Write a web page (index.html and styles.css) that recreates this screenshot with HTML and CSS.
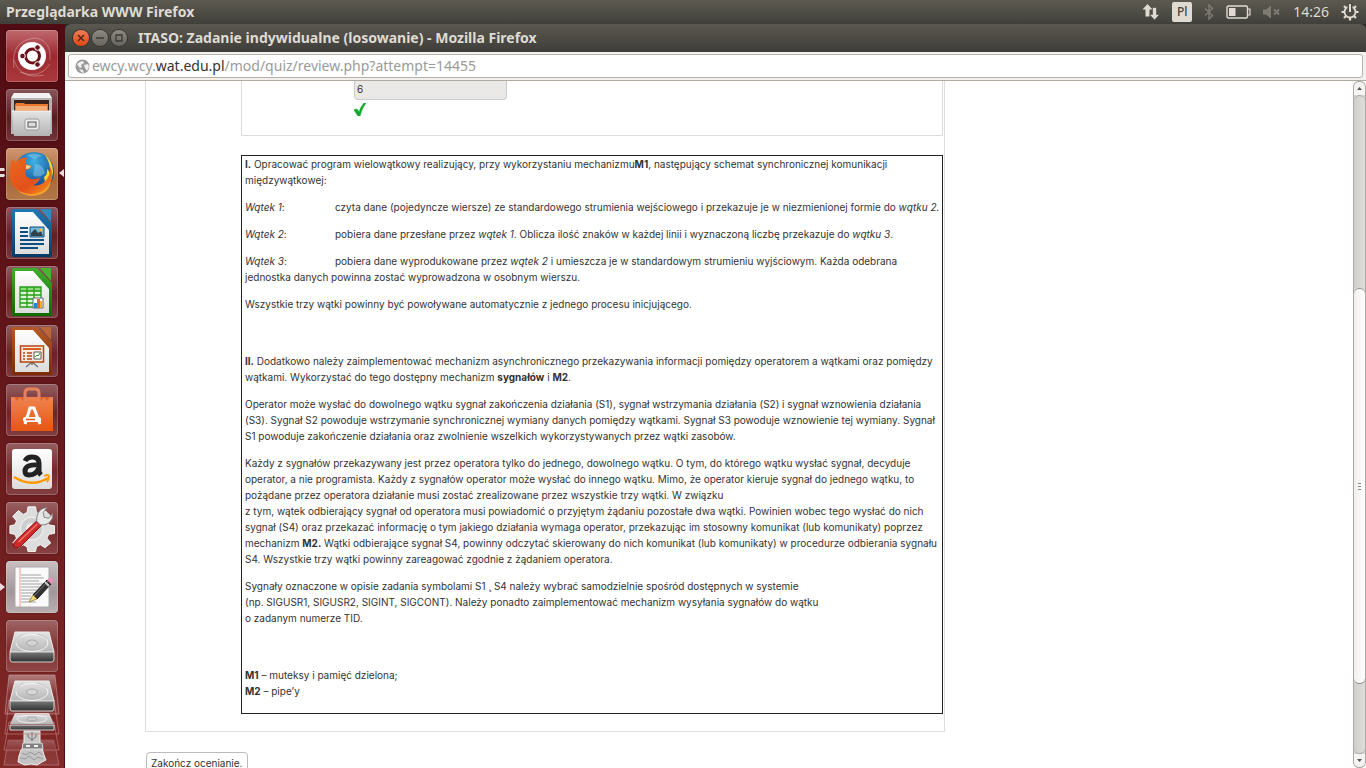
FILE: index.html
```html
<!DOCTYPE html>
<html lang="pl">
<head>
<meta charset="utf-8">
<title>ITASO: Zadanie indywidualne (losowanie)</title>
<link rel="stylesheet" href="styles.css">
</head>
<body>
<svg class="defs" aria-hidden="true">
  <defs>
    <linearGradient id="metal" x1="0" y1="0" x2="0" y2="1"><stop offset="0" stop-color="#e4e4e4"/><stop offset="1" stop-color="#b4b4b4"/></linearGradient>
    <linearGradient id="front" x1="0" y1="0" x2="0" y2="1"><stop offset="0" stop-color="#777"/><stop offset="1" stop-color="#303030"/></linearGradient>
    <linearGradient id="paper" x1="0" y1="0" x2="0" y2="1"><stop offset="0" stop-color="#fff"/><stop offset="1" stop-color="#dcdcdc"/></linearGradient>
    <linearGradient id="blue" x1="0" y1="0" x2="0" y2="1"><stop offset="0" stop-color="#1e79b4"/><stop offset="1" stop-color="#063a66"/></linearGradient>
    <linearGradient id="green" x1="0" y1="0" x2="0" y2="1"><stop offset="0" stop-color="#3fae2e"/><stop offset="1" stop-color="#0c6a00"/></linearGradient>
    <linearGradient id="brown" x1="0" y1="0" x2="0" y2="1"><stop offset="0" stop-color="#b55a27"/><stop offset="1" stop-color="#7c2c00"/></linearGradient>
    <linearGradient id="bag" x1="0" y1="0" x2="0" y2="1"><stop offset="0" stop-color="#f08350"/><stop offset="1" stop-color="#e65613"/></linearGradient>
    <linearGradient id="fox" x1="0" y1="0" x2="1" y2="1"><stop offset="0" stop-color="#e8681c"/><stop offset=".6" stop-color="#e4501c"/><stop offset="1" stop-color="#f49a1c"/></linearGradient>
    <radialGradient id="globe" cx=".5" cy=".25" r=".8"><stop offset="0" stop-color="#3fb0e4"/><stop offset="1" stop-color="#0a2f78"/></radialGradient>
    <linearGradient id="glass" x1="0" y1="0" x2="0" y2="1"><stop offset="0" stop-color="#fff" stop-opacity=".4"/><stop offset=".5" stop-color="#fff" stop-opacity=".06"/><stop offset="1" stop-color="#fff" stop-opacity=".1"/></linearGradient>
    <g id="disk">
      <path d="M9 12h34l5 20H4z" fill="url(#metal)" stroke="#eee" stroke-width="1"/>
      <path d="M4 32h44v7q0 3-2 3H6q-2 0-2-3z" fill="url(#front)" stroke="#d5d5d5" stroke-width="1"/>
      <ellipse cx="26" cy="23" rx="16" ry="8.5" fill="none" stroke="#f4f4f4" stroke-width="1"/>
      <ellipse cx="26" cy="23" rx="5.5" ry="3" fill="#d4d4d4" stroke="#aaa" stroke-width="1"/>
      <path d="M17 14q-6 4-7 9M31 14q8 2 10 5" fill="none" stroke="#bbb" stroke-width=".8"/>
    </g>
  </defs>
</svg>

<header class="panel">
  <span class="panel-title">Przeglądarka WWW Firefox</span>
  <div class="indicators">
    <svg width="18" height="18" viewBox="0 0 18 18"><g fill="#dfdbd2"><path d="M5.500 1l5 5.500H7.500v7h-4v-7H.5z"/><path d="M12.500 17l-5-5.500h3v-7h4v7h3z" stroke="#4b4a44" stroke-width=".6"/></g></svg>
    <span class="keyboard">Pl</span>
    <svg width="10" height="16" viewBox="0 0 10 16"><path d="M1 4.500l7.500 7L5 15V1l3.500 3.500-7.500 7" fill="none" stroke="#7f7c74" stroke-width="1.400"/></svg>
    <svg width="25" height="14" viewBox="0 0 25 14"><rect x="1" y="1" width="20.500" height="12" rx="1.500" fill="none" stroke="#dfdbd2" stroke-width="1.400"/><path d="M22 4h2v6h-2" fill="none" stroke="#dfdbd2" stroke-width="1.200"/><path d="M3 3h6.500v8H3z" fill="#dfdbd2"/></svg>
    <svg width="18" height="14" viewBox="0 0 18 14"><path d="M0 4.500h3l5-4v13l-5-4H0z" fill="#7f7c74"/><path d="M11 4.500l5 5m0-5l-5 5" stroke="#7f7c74" stroke-width="1.800"/></svg>
    <time class="clock">14:26</time>
    <svg width="18" height="18" viewBox="-9 -9 18 18"><circle r="5.500" fill="none" stroke="#dfdbd2" stroke-width="1.800"/><path d="M0-8.500V-5M0 5v3.500M-8.500 0H-5M5 0h3.500M-6-6l2 2M4 4l2 2M-6 6l2-2M4-4l2-2" stroke="#dfdbd2" stroke-width="2.200"/><path d="M0-9V0" stroke="#4b4a44" stroke-width="5"/><path d="M0-8V0" stroke="#dfdbd2" stroke-width="2"/></svg>
  </div>
</header>

<div class="desktop">
  <nav class="launcher" aria-label="Programy">
    <div class="tile dash">
      <svg viewBox="0 0 52 52"><g fill="none" stroke="#fff" stroke-opacity=".3" stroke-width="1"><path d="M8 38Q4 10 30 8q16 3 14 22M14 42q20 8 30-8M8 30q6 20 30 15"/></g><circle cx="26" cy="26" r="14" fill="#fff"/><circle cx="26.500" cy="26" r="7" fill="none" stroke="#6b1219" stroke-width="3"/><g fill="#6b1219" stroke="#fff" stroke-width="1"><circle cx="16.500" cy="26" r="2.800"/><circle cx="31.500" cy="17.500" r="2.800"/><circle cx="31.500" cy="34.500" r="2.800"/></g></svg>
    </div>
    <div class="tile">
      <svg viewBox="0 0 52 52"><path d="M8 4h35l3 5v36H5V9z" fill="#b4b4b4"/><path d="M8 4h35l3 5H5z" fill="#f2f2f2"/><path d="M8 11h35v12H8z" fill="#3c241c"/><path d="M9 16l1-2h8l1 1h23v7H9z" fill="#e8792e"/><path d="M10 18h31M10 20h31" stroke="#ffe1bc" stroke-width="1"/><path d="M6 22h39l-1 25H8z" fill="url(#metal)"/><path d="M6 22h39" stroke="#f5f5f5" fill="none"/><rect x="19" y="30" width="14" height="11" rx="2" fill="#ededed" stroke="#999"/><rect x="22" y="33" width="8" height="5" fill="#ddd" stroke="#555" stroke-width="1"/></svg>
    </div>
    <div class="tile firefox">
      <svg viewBox="0 0 52 52"><circle cx="28" cy="24" r="20" fill="url(#globe)"/><path d="M20 8q7-5 17 0-5 0-8 4-5-4-9-4zM29 16q8 0 10 9-6 6-12 2z" fill="#8fd2f1" opacity=".45"/><path d="M38 6q9 7 9 18-2 17-14 21 8-8 5-16 4-3 3-8 3 2 3 5 1-12-6-20z" fill="#f9d72e"/><path d="M5 27q4 18 20 18 14 0 20-15 0 17-19 18Q8 47 5 27z" fill="#f3a02a"/><path d="M6 12q2-1 3 3 5-6 12-5-2 3-1 6l5 2q-1 4-5 4-2 7 5 9 5 1 9-2-1 6-7 8 8 2 14-6 4-5 3-13 5 11-2 20-8 9-19 8Q8 44 4 31q-1-9 2-19z" fill="url(#fox)"/><path d="M20 17l5 1q-1 3-5 3z" fill="#f8cf91"/></svg>
      <svg class="marks" viewBox="0 0 5 10"><path d="M0 0h4l1 2-1 1H0zM0 6h4l1 1-1 2H0z" fill="#e6dede"/></svg>
      <svg class="focus" viewBox="0 0 5 8"><path d="M5 0v8L0 4z" fill="#e6dede"/></svg>
    </div>
    <div class="tile">
      <svg viewBox="0 0 52 52"><path d="M8 2h23l15 15v31q0 2-2 2H8q-2 0-2-2V4q0-2 2-2z" fill="url(#blue)"/><path d="M34 2h11v13z" fill="#318bc0"/><path d="M9 5h18l16 18v24H9z" fill="url(#paper)"/><path d="M14 21h8M14 25h8M14 29h8M14 33h24M14 37h24M14 41h18" stroke="#0d4f80" stroke-width="2"/><path d="M24 20h14v10H24z" fill="#75b9df" stroke="#0d4f80"/><path d="M25 29v-3l4-4 3 4 3-2 2 5z" fill="#31424b"/><circle cx="35" cy="23" r="1.500" fill="#f4c430"/></svg>
    </div>
    <div class="tile">
      <svg viewBox="0 0 52 52"><path d="M8 2h23l15 15v31q0 2-2 2H8q-2 0-2-2V4q0-2 2-2z" fill="url(#green)"/><path d="M34 2h11v13z" fill="#46b532"/><path d="M9 5h18l16 18v24H9z" fill="url(#paper)"/><path d="M14 21h21v20H14z" fill="#dff5d3"/><path d="M14 21h21v4H14z" fill="#8bdc72"/><path d="M14 21h21v20H14zM14 25h21M14 29h21M14 33h21M14 37h21M21 21v20M28 21v20" fill="none" stroke="#249c18" stroke-width="1.300"/><path d="M27 32h10v10H27z" fill="#fff" stroke="#666"/><path d="M28 37h3v5h-3z" fill="#1e88d0"/><path d="M31 33h3v9h-3z" fill="#e06a20"/><path d="M34 35h2v7h-2z" fill="#f0b020"/></svg>
    </div>
    <div class="tile">
      <svg viewBox="0 0 52 52"><path d="M8 2h23l15 15v31q0 2-2 2H8q-2 0-2-2V4q0-2 2-2z" fill="url(#brown)"/><path d="M34 2h11v13z" fill="#bd6734"/><path d="M9 5h18l16 18v24H9z" fill="url(#paper)"/><path d="M20 42l6-5 6 5M26 36v4" stroke="#777" stroke-width="1.500" fill="none"/><path d="M14.500 21h23v16h-23z" fill="#fbeae0" stroke="#b34713" stroke-width="1.500"/><path d="M17 24h18" stroke="#d95f20" stroke-width="2"/><path d="M17 28h2M17 31h2M17 34h2M21 28h5M21 31h5M21 34h5" stroke="#b34713" stroke-width="1.500"/><path d="M28 27h7v7h-7z" fill="#fff" stroke="#555"/><path d="M29 32l2-2 1 1 2-3" stroke="#249c18" fill="none"/></svg>
    </div>
    <div class="tile">
      <svg viewBox="0 0 52 52"><path d="M5 13h42v34H5z" fill="url(#bag)"/><path d="M8 13l3 4 3-4 3 4 3-4h12l3 4 3-4 3 4 3-4" fill="#d94f18" opacity=".6"/><path d="M19 17V9q0-4 4-4h6q4 0 4 4v8" fill="none" stroke="#e8825e" stroke-width="3"/><path d="M19 40l5-16h4l6 16" fill="none" stroke="#fff" stroke-width="3"/><rect x="17" y="33" width="18" height="5" rx="2" fill="#fff"/><path d="M20 35.500h9" stroke="#e65613" stroke-width="1.500"/></svg>
    </div>
    <div class="tile">
      <svg viewBox="0 0 52 52"><rect x="6" y="6" width="40" height="40" rx="3" fill="url(#paper)"/><path d="M19 18q2-4 7-4 7 0 7 6v8q0 2 2 4M33 22q-14-1-14 6 0 4 4 4 8 0 10-8" fill="none" stroke="#222" stroke-width="5"/><path d="M8 34q18 11 34 1" fill="none" stroke="#f90" stroke-width="2.500"/><path d="M38 33q4-2 5 0 0 4-2 6" fill="none" stroke="#f90" stroke-width="1.800"/></svg>
    </div>
    <div class="tile">
      <svg viewBox="0 0 52 52"><g transform="translate(2 1) scale(.95)"><path d="M21 4h8l1 6 4 2 5-4 6 6-4 5 2 4 6 1v8l-6 1-2 4 4 5-6 5-5-3-4 2-1 5h-8l-1-5-4-2-5 3-6-5 4-5-2-4-5-1v-8l5-1 2-4-4-5 6-6 5 4 4-2z" fill="#ddd" stroke="#f7f7f7"/><circle cx="25" cy="27" r="12" fill="#cfcfcf" stroke="#f4f4f4"/><circle cx="25" cy="27" r="6" fill="#ececec"/><path d="M7 41l23-22 5 5-22 22q-4 2-7 0-1-3 1-5z" fill="#cf2929" stroke="#8d1010"/><path d="M11 41l20-19" stroke="#f07a73" stroke-width="1.500"/><path d="M30 19q0-5 2-9 3-5 9-5l-4 5 1 5 5 1 4-5q1 6-4 10-4 3-9 2z" fill="#e8e8e8" stroke="#808080"/></g></svg>
    </div>
    <div class="tile editor">
      <svg viewBox="0 0 52 52"><path d="M9 6h34v40H9z" fill="#fafafa" stroke="#aaa"/><path d="M14 6v40" stroke="#e99"/><path d="M15 14h20M15 17h23M15 20h18M15 23h22M15 26h20M15 29h16M15 32h14M15 35h10M15 38h12M15 41h15" stroke="#999" stroke-width=".9"/><path d="M27 34l14-15 4 4-14 15z" fill="#333" stroke="#111"/><path d="M28 35l14-15" stroke="#777"/><path d="M41 19l2-2q5 0 4 4l-2 2z" fill="#ec91ba"/><path d="M39 21l4 4" stroke="#ccc" stroke-width="2"/><path d="M27 34l4 4-8 3z" fill="#f0dc72" stroke="#84732a" stroke-width=".7"/></svg>
      <svg class="running" viewBox="0 0 5 8"><path d="M0 0v8l5-4z" fill="#e6dede"/></svg>
    </div>
    <div class="tile"><svg viewBox="0 0 52 52"><use href="#disk"/></svg></div>
    <svg class="stack" viewBox="0 0 64 94">
      <path d="M8 66h46l5 25H4z" fill="url(#glass)" stroke="#b77" stroke-opacity=".7"/>
      <path d="M9 48h45l5 28H4z" fill="#7c2422" fill-opacity=".4" stroke="#b77" stroke-opacity=".7"/>
      <path d="M21 76l4-2 4 1 4-2 4 2 5-1 2 7 2 5-4 2-5 3-6-1-6 1-7-3 1-6z" fill="#c4c4c4" stroke="#eee"/>
      <path d="M22 79l4 2 4-3 5 3 4-3 4 3M20 84l5 1 4-3 5 4 4-3 5 2" stroke="#999" fill="none"/>
      <path d="M24 57h16v14H24z" fill="#c8c8c8" stroke="#eee"/><path d="M23 69h19l1 6H22z" fill="#808080" stroke="#ddd"/>
      <path d="M26 71h4v2h-4zM34 71h4v2h-4z" fill="#eee"/><path d="M32 58v9M28 60v3l4 3 4-3v-3" stroke="#777" fill="none"/>
      <path d="M9 26h45l5 34H5z" fill="none" stroke="#b77" stroke-opacity=".7"/>
      <g transform="translate(6 34)"><path d="M9 5h34l5 11H4z" fill="url(#metal)"/><path d="M4 17h44v5H4z" fill="url(#front)" stroke="#d5d5d5"/><ellipse cx="26" cy="11" rx="15" ry="4" fill="none" stroke="#eee"/><ellipse cx="26" cy="11" rx="5" ry="2" fill="#ccc" stroke="#aaa"/></g>
      <path d="M9 1h46l4 39H5z" fill="url(#glass)" stroke="#c99" stroke-opacity=".6"/>
      <g transform="translate(6 -5)"><use href="#disk"/></g>
    </svg>
  </nav>

  <section class="window">
    <div class="titlebar">
      <button class="control close" aria-label="Zamknij"><svg viewBox="0 0 16 16"><path d="M5 5l6 6m0-6l-6 6" stroke="#51281b" stroke-width="1.500"/></svg></button>
      <button class="control" aria-label="Minimalizuj"><svg viewBox="0 0 16 16"><path d="M4 8h8" stroke="#3c3b37" stroke-width="1.500"/></svg></button>
      <button class="control" aria-label="Maksymalizuj"><svg viewBox="0 0 16 16"><path d="M5 5h6v6H5z" fill="none" stroke="#3c3b37" stroke-width="1.300"/></svg></button>
      <h1 class="window-title">ITASO: Zadanie indywidualne (losowanie) - Mozilla Firefox</h1>
    </div>
    <div class="toolbar">
      <div class="address">
        <svg width="15" height="15" viewBox="0 0 15 15"><circle cx="7.500" cy="7.500" r="7" fill="#999"/><path d="M2 5q3-3 6-3l1 2-3 2 1 2-2 1-2-2zM9 6l4-1 1 3-2 4-2-3zM4 10l4 1 1 3-3-1z" fill="#eee"/></svg>
        <span class="url">ewcy.wcy.<b>wat.edu.pl</b>/mod/quiz/review.php?attempt=14455</span>
      </div>
    </div>
    <div class="viewport">
      <main class="page">
        <div class="question">
          <div class="answer">
            <input class="answer-field" type="text" value="6" aria-label="Odpowiedź" readonly>
            <svg class="tick" viewBox="0 0 12 13"><path d="M0 7l3-1 2 3q2-6 5-9h2Q8 5 6 13H4z" fill="#0fa82c" stroke="#0fa82c" stroke-width=".6"/></svg>
          </div>
          <article class="task">
            <p><b>I.</b> Opracować program wielowątkowy realizujący, przy wykorzystaniu mechanizmu<b>M1</b>, następujący schemat synchronicznej komunikacji międzywątkowej:</p>
            <p><span class="term"><i>Wątek 1</i>:</span>czyta dane (pojedyncze wiersze) ze standardowego strumienia wejściowego i przekazuje je w niezmienionej formie do <i>wątku 2.</i></p>
            <p><span class="term"><i>Wątek 2</i>:</span>pobiera dane przesłane przez <i>wątek 1</i>. Oblicza ilość znaków w każdej linii i wyznaczoną liczbę przekazuje do <i>wątku 3</i>.</p>
            <p><span class="term"><i>Wątek 3</i>:</span>pobiera dane wyprodukowane przez <i>wątek 2</i> i umieszcza je w standardowym strumieniu wyjściowym. Każda odebrana jednostka danych powinna zostać wyprowadzona w osobnym wierszu.</p>
            <p>Wszystkie trzy wątki powinny być powoływane automatycznie z jednego procesu inicjującego.</p>
            <p class="blank"></p>
            <p><b>II.</b> Dodatkowo należy zaimplementować mechanizm asynchronicznego przekazywania informacji pomiędzy operatorem a wątkami oraz pomiędzy wątkami. Wykorzystać do tego dostępny mechanizm <b>sygnałów</b> i <b>M2</b>.</p>
            <p>Operator może wysłać do dowolnego wątku sygnał zakończenia działania (S1), sygnał wstrzymania działania (S2) i sygnał wznowienia działania (S3). Sygnał S2 powoduje wstrzymanie synchronicznej wymiany danych pomiędzy wątkami. Sygnał S3 powoduje wznowienie tej wymiany. Sygnał S1 powoduje zakończenie działania oraz zwolnienie wszelkich wykorzystywanych przez wątki zasobów.</p>
            <p>Każdy z sygnałów przekazywany jest przez operatora tylko do jednego, dowolnego wątku. O tym, do którego wątku wysłać sygnał, decyduje operator, a nie programista. Każdy z sygnałów operator może wysłać do innego wątku. Mimo, że operator kieruje sygnał do jednego wątku, to pożądane przez operatora działanie musi zostać zrealizowane przez wszystkie trzy wątki. W związku<br>z tym, wątek odbierający sygnał od operatora musi powiadomić o przyjętym żądaniu pozostałe dwa wątki. Powinien wobec tego wysłać do nich sygnał (S4) oraz przekazać informację o tym jakiego działania wymaga operator, przekazując im stosowny komunikat (lub komunikaty) poprzez mechanizm <b>M2.</b> Wątki odbierające sygnał S4, powinny odczytać skierowany do nich komunikat (lub komunikaty) w procedurze odbierania sygnału S4. Wszystkie trzy wątki powinny zareagować zgodnie z żądaniem operatora.</p>
            <p>Sygnały oznaczone w opisie zadania symbolami S1 ¸ S4 należy wybrać samodzielnie spośród dostępnych w systemie<br>(np. SIGUSR1, SIGUSR2, SIGINT, SIGCONT). Należy ponadto zaimplementować mechanizm wysyłania sygnałów do wątku<br>o zadanym numerze TID.</p>
            <p class="blank"></p>
            <p><b>M1</b> – muteksy i pamięć dzielona;<br><b>M2</b> – pipe’y</p>
          </article>
        </div>
        <button class="finish">Zakończ ocenianie.</button>
      </main>
      <div class="scrollbar">
        <div class="cap"><svg viewBox="0 0 11 12"><path d="M3 8h5L5.500 5z" fill="#555"/></svg></div>
        <div class="track before"></div>
        <div class="thumb"><i></i><i></i><i></i></div>
        <div class="track after"></div>
        <div class="cap bottom"><svg viewBox="0 0 11 12"><path d="M3 5h5L5.500 8z" fill="#555"/></svg></div>
      </div>
    </div>
  </section>
</div>
</body>
</html>
```
FILE: styles.css
```css
* { box-sizing: border-box; }

body {
  margin: 0;
  height: 100vh;
  display: flex;
  flex-direction: column;
  overflow: hidden;
  background: #2c2b29;
  color: #333;
  font-family: Inter, "Liberation Sans", Arial, sans-serif;
  font-size: 10px;
  line-height: 16px;
}

svg { display: block; flex: none; }
.defs { position: absolute; width: 0; height: 0; }

/* Top panel */
.panel {
  flex: none;
  height: 24px;
  padding: 0 7px 0 6px;
  display: flex;
  align-items: center;
  justify-content: space-between;
  background: linear-gradient(#5c5a50, #403f3a);
  color: #dfdbd2;
  font-family: "Noto Sans", sans-serif;
  font-size: 14px;
}
.panel-title { font-weight: 700; }
.indicators { display: flex; align-items: center; gap: 12px; }
.keyboard {
  width: 20px;
  height: 20px;
  border-radius: 2px;
  background: #dfdbd2;
  color: #45443f;
  font-size: 12px;
  font-weight: 500;
  line-height: 20px;
  text-align: center;
}

.desktop { flex: 1; min-height: 0; display: flex; }

/* Launcher */
.launcher {
  flex: none;
  width: 65px;
  padding: 6px 0 0 6px;
  display: flex;
  flex-direction: column;
  gap: 7px;
  overflow: hidden;
  background: linear-gradient(#500c12, #63161a 45%, #812927);
  border-right: 1px solid #4a1114;
}
.tile {
  position: relative;
  flex: none;
  width: 52px;
  height: 52px;
  border-radius: 4px;
  background: linear-gradient(rgba(255, 255, 255, .3), rgba(255, 255, 255, .05) 55%, rgba(255, 255, 255, .16));
  box-shadow: inset 0 0 0 1px rgba(255, 255, 255, .2), 0 0 2px rgba(0, 0, 0, .4);
}
.dash { background: linear-gradient(#c06a70, #9c2930 50%, #a93a3c); }
.firefox { background: linear-gradient(#cf9670, #a8683c 60%, #b47848); }
.editor { background: linear-gradient(#c9bfc1, #a2989b 60%, #b9b0b2); }
.marks, .focus, .running { position: absolute; width: 5px; }
.marks { left: -6px; top: 20px; height: 10px; }
.focus { right: -6px; top: 21px; height: 8px; }
.running { left: -6px; top: 22px; height: 8px; }
.stack { width: 64px; height: 94px; margin: -5px 0 0 -6px; }

/* Window frame */
.window { flex: 1; min-width: 0; display: flex; flex-direction: column; }
.titlebar {
  flex: none;
  height: 28px;
  padding-left: 8px;
  display: flex;
  align-items: center;
  gap: 3px;
  border-radius: 6px 6px 0 0;
  background: linear-gradient(#5b5850, #3e3d39);
}
.control {
  width: 16px;
  height: 16px;
  padding: 0;
  border: 0;
  border-radius: 8px;
  background: linear-gradient(#8c8a82, #66645d);
  box-shadow: 0 0 0 1px #35342f;
}
.close { background: linear-gradient(#f47c55, #dd4814); }
.window-title {
  margin: 0 0 0 8px;
  color: #dfdbd2;
  font-family: "Noto Sans", sans-serif;
  font-size: 14px;
  font-weight: 700;
  line-height: 20px;
  white-space: nowrap;
}
.toolbar {
  flex: none;
  padding: 2px 3px;
  background: #f2f1f0;
  border-bottom: 1px solid #b0aaa3;
}
.address {
  height: 24px;
  padding: 0 6px;
  display: flex;
  align-items: center;
  gap: 2px;
  border: 1px solid #b5b0aa;
  border-radius: 3px;
  background: #fff;
}
.url {
  color: #9a9a9a;
  font-family: "Noto Sans", sans-serif;
  font-size: 14px;
  white-space: nowrap;
}
.url b { color: #333; font-weight: 400; }

/* Quiz page */
.viewport { flex: 1; min-height: 0; display: flex; background: #fff; }
.page { flex: 1; min-width: 0; padding-left: 80px; overflow: hidden; }
.question {
  max-width: 800px;
  padding: 0 1px 17px 95px;
  border: 1px solid #ddd;
  border-top: 0;
}
.answer {
  padding: 0 0 19px 112px;
  border: 1px solid #ddd;
  border-top: 0;
}
.answer-field {
  display: block;
  width: 153px;
  height: 19px;
  padding: 0 2px 2px;
  border: 1px solid #ccc;
  border-top: 0;
  border-radius: 0 0 4px 4px;
  background: #ebe9e8;
  color: #333;
  font: inherit;
}
.tick { width: 12px; height: 13px; margin-top: 3px; }
.task {
  margin-top: 19px;
  padding: 0 0 14px 3px;
  border: 1px solid #222;
}
.task p { margin: 0 0 11px; }
.task p:last-child { margin: 0; }
.task .blank { height: 19px; }
.term { display: inline-block; width: 90px; }
.finish {
  margin: 20px 0 0 1px;
  padding: 2px 4px;
  border: 1px solid #bbb;
  border-radius: 4px;
  background: #fff;
  color: #333;
  font: inherit;
}

/* Scrollbar */
.scrollbar {
  flex: none;
  width: 13px;
  display: flex;
  flex-direction: column;
  border: 1px solid #aaa6a1;
  border-width: 0 1px;
  border-radius: 6px;
  background: #dad8d5;
}
.cap {
  height: 14px;
  border-top: 1px solid #aaa6a1;
  border-radius: 6px 6px 0 0;
  background: #f5f4f3;
}
.cap.bottom {
  border-top: 0;
  border-bottom: 1px solid #aaa6a1;
  border-radius: 0 0 6px 6px;
}
.track { background: linear-gradient(90deg, #d0cecb, #e0dedb); }
.before { flex: 193; border-top: 1px solid #aaa6a1; border-radius: 6px 6px 0 0; }
.after { flex: 69; border-bottom: 1px solid #aaa6a1; border-radius: 0 0 6px 6px; }
.thumb {
  flex: 397;
  display: flex;
  flex-direction: column;
  align-items: center;
  justify-content: center;
  gap: 2px;
  border: 1px solid #8f8b86;
  border-width: 1px 0;
  border-radius: 6px;
  background: linear-gradient(90deg, #f0efee, #fff);
}
.thumb i { width: 3px; height: 1px; background: #888; }
```
